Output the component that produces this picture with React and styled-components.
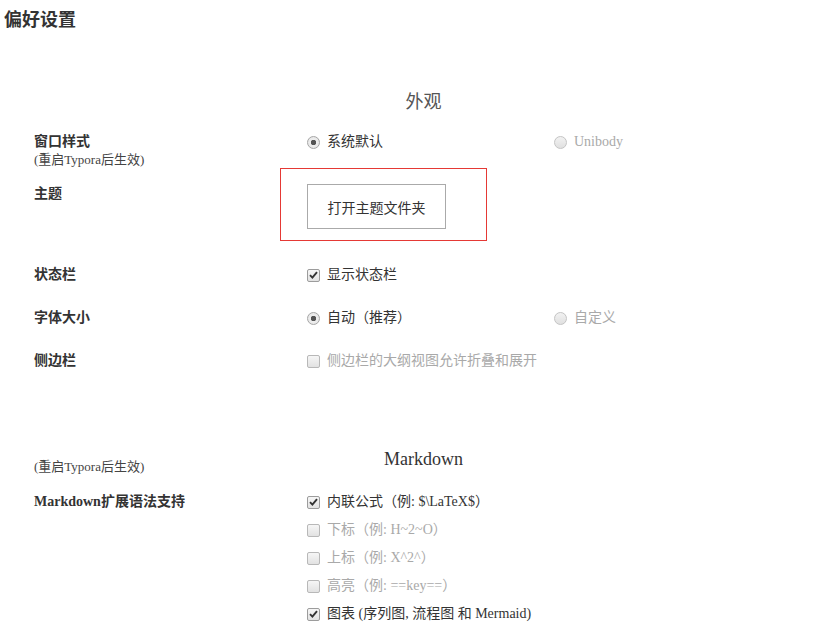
import styled, { createGlobalStyle } from "styled-components";

const GlobalStyle = createGlobalStyle`
  html, body {
    margin: 0;
    padding: 0;
    background: #fff;
    overflow: hidden;
  }
  body {
    font-family: "Liberation Serif", "Noto Sans CJK SC", serif;
    color: #333;
  }
`;

// 页面整体
const Page = styled.div`
  padding-top: 8px;
  width: 813px;
`;

const Title = styled.h1`
  margin: 0;
  padding-left: 4px;
  font-size: 18px;
  line-height: 24px;
  font-weight: bold;
  color: #333;
`;

const Content = styled.div`
  padding-left: 34px;
  display: flex;
  flex-direction: column;
`;

const SectionHead = styled.div`
  display: grid;
  margin-top: ${(p) => p.$top}px;
  > * {
    grid-area: 1 / 1;
  }
`;

const Heading = styled.h2`
  margin: 0 0 4px;
  justify-self: center;
  align-self: start;
  font-size: 18px;
  line-height: 24px;
  font-weight: normal;
  color: ${(p) => (p.$dark ? "#333" : "#555")};
`;

const Note = styled.div`
  font-size: 13px;
  line-height: 16px;
  color: #444;
`;

const HeadNote = styled(Note)`
  justify-self: start;
  align-self: end;
`;

// 一行设置: 左侧标题, 右侧选项
const Row = styled.div`
  display: grid;
  grid-template-columns: 273px 247px 1fr;
  align-items: start;
  margin-top: ${(p) => p.$top}px;
`;

const Label = styled.div`
  font-size: 14px;
  line-height: 20px;
  font-weight: bold;
  color: #333;
`;

const OptionList = styled.div`
  display: flex;
  flex-direction: column;
  gap: 8px;
`;

const Option = styled.label`
  display: flex;
  align-items: center;
  gap: 7px;
  font-size: 14px;
  line-height: 20px;
  color: ${(p) => (p.$off ? "#a9a9a9" : "#333")};
  white-space: nowrap;
`;

const RadioMark = styled.span`
  flex: none;
  box-sizing: border-box;
  width: 13px;
  height: 13px;
  border-radius: 50%;
  border: 1px solid ${(p) => (p.$on ? "#a6a6a6" : "#c4c4c4")};
  background: ${(p) =>
    p.$on
      ? "radial-gradient(circle, #555 0 2.5px, #eee 3px, #e2e2e2 100%)"
      : "linear-gradient(#f2f2f2, #e0e0e0)"};
`;

const CheckMark = styled.span`
  flex: none;
  box-sizing: border-box;
  width: 13px;
  height: 13px;
  border-radius: 2px;
  border: 1px solid ${(p) => (p.$on ? "#9c9c9c" : "#b8b8b8")};
  background: linear-gradient(#f6f6f6, #e2e2e2);
  display: flex;
  align-items: center;
  justify-content: center;
  svg {
    display: block;
  }
`;

const ButtonWrap = styled.div`
  position: relative;
  width: 139px;
`;

const Button = styled.button`
  box-sizing: border-box;
  width: 139px;
  height: 45px;
  border: 1px solid #aaa;
  background: #fff;
  font-family: inherit;
  font-size: 14px;
  color: #333;
  padding: 0;
`;

// 截图上的红色标注框
const Highlight = styled.div`
  position: absolute;
  top: -16px;
  left: -27px;
  width: 207px;
  height: 73px;
  box-sizing: border-box;
  border: 1px solid #e53935;
  pointer-events: none;
`;

const Radio = ({ on, off, children }) => (
  <Option $off={off}>
    <RadioMark $on={on} />
    {children}
  </Option>
);

const Check = ({ on, off, children }) => (
  <Option $off={off}>
    <CheckMark $on={on}>
      {on && (
        <svg width="9" height="8" viewBox="0 0 9 8">
          <path
            d="M1 4.2 L3.4 6.6 L8 1.2"
            fill="none"
            stroke="#333"
            strokeWidth="1.9"
          />
        </svg>
      )}
    </CheckMark>
    {children}
  </Option>
);

export default function App() {
  return (
    <>
      <GlobalStyle />
      <Page>
        <Title>偏好设置</Title>
        <Content>
          <SectionHead $top={58}>
            <Heading>外观</Heading>
          </SectionHead>

          <Row $top={14}>
            <div>
              <Label>窗口样式</Label>
              <Note>(重启Typora后生效)</Note>
            </div>
            <Radio on>系统默认</Radio>
            <Radio off>Unibody</Radio>
          </Row>

          <Row $top={16}>
            <Label>主题</Label>
            <ButtonWrap>
              <Button>打开主题文件夹</Button>
              <Highlight />
            </ButtonWrap>
          </Row>

          <Row $top={36}>
            <Label>状态栏</Label>
            <Check on>显示状态栏</Check>
          </Row>

          <Row $top={23}>
            <Label>字体大小</Label>
            <Radio on>自动（推荐）</Radio>
            <Radio off>自定义</Radio>
          </Row>

          <Row $top={23}>
            <Label>侧边栏</Label>
            <Check off>侧边栏的大纲视图允许折叠和展开</Check>
          </Row>

          <SectionHead $top={76}>
            <Heading $dark>Markdown</Heading>
            <HeadNote>(重启Typora后生效)</HeadNote>
          </SectionHead>

          <Row $top={17}>
            <Label>Markdown扩展语法支持</Label>
            <OptionList>
              <Check on>内联公式（例: $\LaTeX$）</Check>
              <Check off>下标（例: H~2~O）</Check>
              <Check off>上标（例: X^2^）</Check>
              <Check off>高亮（例: ==key==）</Check>
              <Check on>图表 (序列图, 流程图 和 Mermaid)</Check>
            </OptionList>
          </Row>
        </Content>
      </Page>
    </>
  );
}
